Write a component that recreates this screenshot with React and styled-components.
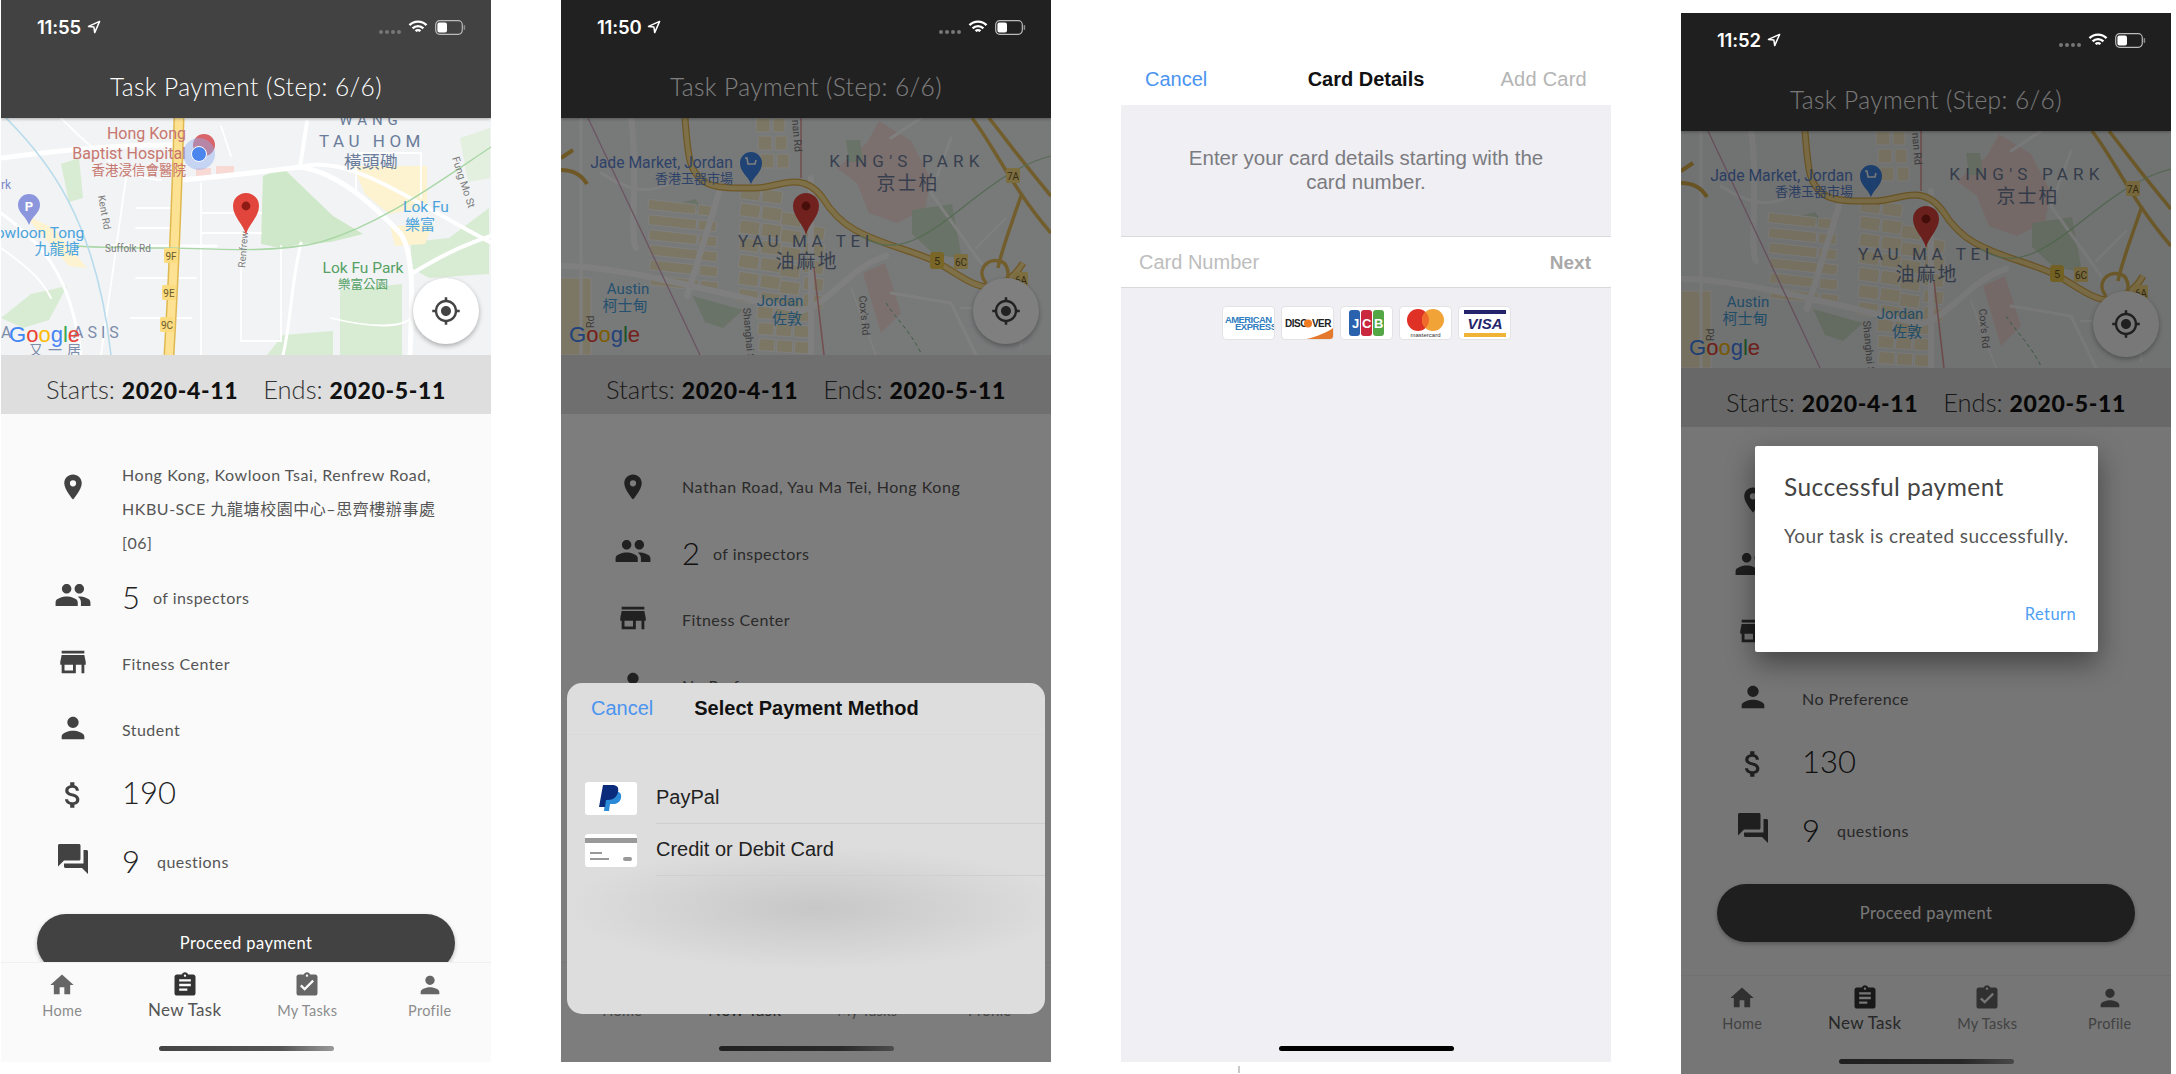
import React from 'react';
import styled, { createGlobalStyle } from 'styled-components';
import {
  MdLocationOn, MdPeople, MdStore, MdPerson, MdAttachMoney, MdForum,
  MdHome, MdAssignment, MdAssignmentTurnedIn, MdMyLocation,
} from 'react-icons/md';

const UI_FONT = '"Lato", "Noto Sans CJK TC", sans-serif';
const IOS_FONT = '"Liberation Sans", "Noto Sans CJK TC", sans-serif';
const MAP_FONT = '"Roboto", "Noto Sans CJK TC", sans-serif';

const GlobalStyle = createGlobalStyle`
  html, body { margin: 0; padding: 0; background: #fff; overflow: hidden; }
  * { box-sizing: border-box; }
`;

const Page = styled.div`
  width: 2176px;
  height: 1074px;
  padding-left: 1px;
  display: flex;
  gap: 70px;
  align-items: flex-start;
  background: #fff;
  overflow: hidden;
`;

const Phone = styled.div`
  position: relative;
  flex: none;
  width: 490px;
  height: 1062px;
  margin-top: ${(p) => p.$top || 0}px;
  display: flex;
  flex-direction: column;
  background: #fafafa;
  overflow: hidden;
  font-family: ${UI_FONT};
`;

const Dim = styled.div`
  position: absolute;
  inset: 0;
  background: rgba(0, 0, 0, ${(p) => p.$level});
  z-index: 2;
`;

const Header = styled.header`
  position: relative;
  flex: none;
  height: 118px;
  background: #424242;
  box-shadow: 0 1px 3px rgba(0, 0, 0, 0.3);
  z-index: 1;
`;

const Status = styled.div`
  position: absolute;
  left: 36px;
  right: 25px;
  top: 13px;
  height: 28px;
  display: flex;
  align-items: center;
  color: #fff;
  font-family: "Inter", sans-serif;
  z-index: 3;
`;

const Clock = styled.span`
  font-size: 18.5px;
  font-weight: 600;
  letter-spacing: -0.2px;
  margin-right: 6px;
`;

const StatusRight = styled.div`
  margin-left: auto;
  display: flex;
  align-items: center;
  gap: 7px;
`;

const SignalDots = styled.div`
  display: flex;
  gap: 2px;
  margin-top: 10px;
  & > i {
    width: 4px;
    height: 4px;
    border-radius: 50%;
    background: #777;
  }
`;

const Title = styled.h1`
  position: absolute;
  left: 0;
  right: 0;
  bottom: 15px;
  margin: 0;
  text-align: center;
  color: #fff;
  font-size: 24.5px;
  line-height: 32px;
  font-weight: 300;
  letter-spacing: 0.42px;
`;

const MapBox = styled.div`
  position: relative;
  flex: none;
  height: 237px;
  background: #f1f3f4;
  & > svg { display: block; }
`;

const LocateButton = styled.div`
  position: absolute;
  right: 12px;
  bottom: 11px;
  width: 66px;
  height: 66px;
  border-radius: 50%;
  background: #fff;
  display: flex;
  align-items: center;
  justify-content: center;
  color: #444;
  box-shadow: 0 2px 5px rgba(0, 0, 0, 0.3);
`;

const DatesBar = styled.div`
  flex: none;
  height: 59px;
  padding-top: 8px;
  background: #dedede;
  display: flex;
  align-items: center;
  justify-content: center;
  gap: 25px;
  color: #333;
  font-size: 25.5px;
  font-weight: 300;
  & b {
    font-weight: 900;
    font-size: 23px;
    color: #111;
    letter-spacing: 0.65px;
  }
`;

const Body = styled.main`
  flex: 1;
  min-height: 0;
  padding-top: 40px;
  overflow: hidden;
`;

const Row = styled.div`
  display: flex;
  align-items: center;
  min-height: 66px;
  padding-left: 23px;
  padding-right: 30px;
  color: #555;
  font-size: 16px;
`;

const RowIcon = styled.div`
  flex: none;
  align-self: flex-start;
  width: 98px;
  height: 66px;
  display: flex;
  align-items: center;
  justify-content: center;
  color: #424242;
  padding-bottom: ${(p) => p.$lift || 0}px;
`;

const Address = styled.div`
  padding: 4px 0;
  line-height: 34px;
  font-size: 16px;
  letter-spacing: 0.55px;
`;

const Count = styled.span`
  font-size: 31px;
  font-weight: 300;
  color: #222;
  margin-right: ${(p) => p.$gap}px;
  margin-bottom: ${(p) => p.$up || 0}px;
  line-height: 1;
`;

const RowText = styled.span`
  letter-spacing: 0.45px;
`;

const Primary = styled.button`
  display: block;
  width: 418px;
  height: 58px;
  margin: ${(p) => p.$gap}px auto 0;
  border: 0;
  border-radius: 29px;
  background: #424242;
  color: #fff;
  font-family: ${UI_FONT};
  font-size: 16.5px;
  letter-spacing: 0.4px;
  box-shadow: 0 2px 4px rgba(0, 0, 0, 0.25);
`;

const Tabs = styled.nav`
  position: relative;
  flex: none;
  height: 100px;
  padding: 8px 0 0;
  display: grid;
  grid-template-columns: repeat(4, 122.5px);
  background: #fafafa;
  border-top: 1px solid #f0f0f0;
`;

const Tab = styled.div`
  display: flex;
  flex-direction: column;
  align-items: center;
  color: ${(p) => p.$active ? '#333' : '#666'};
  & > span {
    margin-top: ${(p) => p.$active ? 1 : 2}px;
    font-size: ${(p) => p.$active ? 17 : 14.5}px;
    color: ${(p) => p.$active ? '#555' : '#8c8c8c'};
    line-height: 20px;
    letter-spacing: 0.3px;
  }
`;

const HomeBar = styled.div`
  position: absolute;
  left: 158px;
  bottom: 11px;
  width: 175px;
  height: 5px;
  border-radius: 3px;
  background: ${(p) => p.$solid ? '#000' : 'linear-gradient(90deg, #444 0%, #555 70%, #999 100%)'};
`;

/* payment sheet, second phone */
const Sheet = styled.section`
  position: absolute;
  left: 6px;
  top: 683px;
  width: 478px;
  height: 331px;
  border-radius: 15px;
  background:
    radial-gradient(ellipse 250px 62px at 52% 68%, #c7c7c7 0%, rgba(199, 199, 199, 0) 100%),
    #dddddd;
  font-family: ${IOS_FONT};
  z-index: 4;
`;

const SheetHead = styled.div`
  height: 52px;
  display: flex;
  align-items: center;
  padding-left: 24px;
  border-bottom: 1px solid #d9d9d9;
`;

const LinkText = styled.span`
  color: #4b94ef;
  font-size: 20px;
`;

const SheetTitle = styled.strong`
  margin-left: 41px;
  font-size: 20px;
  color: #111;
`;

const MethodList = styled.div`
  padding-top: 37px;
`;

const Method = styled.div`
  display: flex;
  align-items: center;
  height: 52px;
  padding-left: 18px;
  color: #222;
  font-size: 20px;
`;

const MethodLogo = styled.div`
  flex: none;
  width: 52px;
  height: 33px;
  border-radius: 3px;
  background: #fff;
  overflow: hidden;
  display: flex;
  align-items: center;
  justify-content: center;
`;

const MethodLabel = styled.div`
  flex: 1;
  height: 100%;
  margin-left: 19px;
  display: flex;
  align-items: center;
  border-bottom: 1px solid #cfcfcf;
`;

/* card details, third phone */
const CardScreen = styled(Phone)`
  background: #efeff4;
  font-family: ${IOS_FONT};
`;

const CardNav = styled.div`
  flex: none;
  height: 105px;
  background: #fff;
  padding: 56px 24px 0 24px;
  display: grid;
  grid-template-columns: 1fr auto 1fr;
  align-items: start;
  & > span { line-height: 46px; }
  & > strong { line-height: 46px; }
`;

const NavTitle = styled.strong`
  font-size: 20px;
  color: #111;
`;

const NavAction = styled.span`
  justify-self: end;
  font-size: 20px;
  letter-spacing: 0.25px;
  color: #b4b4b4;
`;

const Hint = styled.p`
  flex: none;
  height: 131px;
  margin: 0;
  padding: 41px 60px 0;
  text-align: center;
  color: #7b7b7f;
  font-size: 20.5px;
  line-height: 24px;
`;

const CardInput = styled.div`
  flex: none;
  height: 52px;
  display: flex;
  align-items: center;
  justify-content: space-between;
  padding: 0 20px 0 18px;
  background: #fff;
  border-top: 1px solid #d9d9dc;
  border-bottom: 1px solid #d9d9dc;
  color: #bdbdbd;
  font-size: 20px;
`;

const NextLabel = styled.span`
  color: #a9a9a9;
  font-weight: 700;
  font-size: 19px;
  margin-top: 2px;
`;

const CardLogos = styled.div`
  flex: none;
  margin-top: 18px;
  display: flex;
  justify-content: center;
  gap: 6px;
`;

const CardLogo = styled.div`
  width: 53px;
  height: 34px;
  background: #fff;
  border: 1px solid #e3e3e6;
  border-radius: 4px;
  overflow: hidden;
  & > svg { display: block; }
`;

const Tick = styled.div`
  position: absolute;
  left: 1238px;
  top: 1066px;
  width: 2px;
  height: 7px;
  background: #c8c8c8;
`;

/* dialog, fourth phone */
const Dialog = styled.section`
  position: absolute;
  left: 74px;
  top: 433px;
  width: 343px;
  height: 206px;
  padding: 25px 22px 0 29px;
  background: #fff;
  border-radius: 2px;
  box-shadow: 0 11px 28px rgba(0, 0, 0, 0.42);
  z-index: 4;
`;

const DialogTitle = styled.h2`
  margin: 0;
  font-size: 24.5px;
  line-height: 32px;
  font-weight: 400;
  color: #444;
  letter-spacing: 0.45px;
`;

const DialogText = styled.p`
  margin: 20px 0 0;
  font-size: 19px;
  line-height: 26px;
  color: #555;
  white-space: nowrap;
  letter-spacing: 0.45px;
`;

const DialogAction = styled.div`
  margin-top: 55px;
  text-align: right;
  color: #4f9ff5;
  font-size: 16.5px;
  letter-spacing: 0.4px;
`;

const StatusBar = ({ time }) => (
  <Status>
    <Clock>{time}</Clock>
    <svg width="14" height="14" viewBox="0 0 14 14" fill="none" stroke="#fff" strokeWidth="1.5" strokeLinejoin="round">
      <path d="M12.6 1.4L1.5 6.4l5.4.7.8 5.5z" />
    </svg>
    <StatusRight>
      <SignalDots><i /><i /><i /><i /></SignalDots>
      <svg width="20" height="15" viewBox="0 0 20 15" fill="none" stroke="#fff" strokeWidth="2.4">
        <path d="M1.5 5.2a12 12 0 0 1 17 0" />
        <path d="M4.6 8.4a7.6 7.6 0 0 1 10.8 0" />
        <path d="M7.6 11.2a3.4 3.4 0 0 1 4.8 0" />
      </svg>
      <svg width="31" height="15" viewBox="0 0 31 15">
        <rect x="0.7" y="0.7" width="26.6" height="13.6" rx="4" fill="none" stroke="#bbb" strokeWidth="1.2" />
        <rect x="2.4" y="2.4" width="9.6" height="10.2" rx="2" fill="#fff" />
        <rect x="28.6" y="5" width="1.6" height="5" rx="0.8" fill="#888" />
      </svg>
    </StatusRight>
  </Status>
);

const Pin = () => (
  <g>
    <path d="M245 117c-2-10-13-18-13-29a13 13 0 0 1 26 0c0 11-11 19-13 29z" fill="#e2453c" />
    <circle cx="245" cy="88" r="4.4" fill="#8e1c15" />
  </g>
);

const GoogleMark = ({ x, y }) => (
  <text x={x} y={y} fontFamily='"Liberation Sans", sans-serif' fontSize="22">
    <tspan fill="#4285f4">G</tspan>
    <tspan fill="#ea4335">o</tspan>
    <tspan fill="#fbbc05">o</tspan>
    <tspan fill="#4285f4">g</tspan>
    <tspan fill="#34a853">l</tspan>
    <tspan fill="#ea4335">e</tspan>
  </text>
);

const Shield = ({ x, y, label }) => (
  <g>
    <rect x={x} y={y} width="14" height="15" rx="1.5" fill="#fbdc81" />
    <text x={x + 7} y={y + 11.5} textAnchor="middle" fontSize="10" fontFamily={MAP_FONT} fill="#6a5a2a">{label}</text>
  </g>
);

const KowloonMap = () => (
  <svg width="490" height="237" viewBox="0 0 490 237" fontFamily={MAP_FONT}>
    <rect width="490" height="237" fill="#f1f3f4" />
    <path d="M262 58l20-8 50 48 30 18-32 8-30 2-20 4-20-4z" fill="#cfe8c9" />
    <path d="M339 172l62-6v71h-62zM266 237l16-20 50-4v24zM410 124l38-4 40-30v66l-60 4-18-10zM60 46l18-6 4 40-14 4zM0 200l30-24 36-8-18 34-26 8z" fill="#d8ecd3" />
    <path d="M459 20l30-10v50l-22 4z" fill="#e3f0df" />
    <path d="M352 48h74v40l-38 8-24-20zM389 108l43-2-8 20-30 2zM22 96l30 14 34 40-18-2-24-28z" fill="#fdf3d0" />
    <rect x="195" y="50" width="15" height="8" fill="#f8d9d4" />
    <rect x="215" y="48" width="18" height="10" fill="#f8d9d4" />
    <g fill="none" stroke="#fff" strokeLinecap="round">
      <path d="M0 40c60-8 120-14 178-13M179 62c50-4 80-8 120-13 40 6 75 40 100 66 15 20 12 70 10 122" strokeWidth="5" />
      <path d="M299 49l7-45M299 49c50-15 120 40 190 75M490 118c-30 10-50 20-80 38" strokeWidth="4" />
      <path d="M0 95c40 30 70 60 80 142M110 128h105M300 125c-10 40-10 80-18 112" strokeWidth="3" />
      <path d="M125 60l-25 177M200 65v172M240 128v95h40v-95M135 160h60M60 0c30 30 60 60 100 62M220 8l10 30M330 200c40 10 70 10 80 0M130 200h60M355 75v-40h65v45M0 130c25 18 40 30 50 50M135 90h40M135 110h40M200 95h60M200 115h60" strokeWidth="1.8" />
    </g>
    <path d="M178 0c-2 70-6 170-10 237" fill="none" stroke="#e0b850" strokeWidth="11" />
    <path d="M178 0c-2 70-6 170-10 237" fill="none" stroke="#fde293" strokeWidth="8" />
    <path d="M75 128c30 2 60 2 95 2 60 2 110 4 150-6 60-18 110-55 170-95" fill="none" stroke="#a9d7a6" strokeWidth="1.4" />
    <path d="M5 0c40 40 90 100 105 237" fill="none" stroke="#b8dcec" strokeWidth="1.6" />
    <g fontSize="16" fill="#c7766f" textAnchor="end">
      <text x="185" y="21">Hong Kong</text>
      <text x="185" y="41">Baptist Hospital</text>
      <text x="185" y="57" fontSize="13.5">香港浸信會醫院</text>
    </g>
    <circle cx="203" cy="27" r="11" fill="#d9646a" />
    <circle cx="198" cy="36" r="16" fill="#8fb0ef" opacity="0.45" />
    <circle cx="198" cy="36" r="7.5" fill="#4a86ee" stroke="#fff" strokeWidth="1" />
    <g fill="#6b7d9b" textAnchor="middle">
      <text x="371" y="29" fontSize="17" letterSpacing="4.5">TAU HOM</text>
      <text x="370" y="50" fontSize="17.5" letterSpacing="0.5">橫頭磡</text>
      <text x="370" y="7" fontSize="15" letterSpacing="5">WANG</text>
    </g>
    <g fill="#4aa3dc" textAnchor="middle">
      <text x="425" y="94" fontSize="15.5">Lok Fu</text>
      <text x="419" y="112" fontSize="15">樂富</text>
      <text x="39" y="120" fontSize="15.5">owloon Tong</text>
      <text x="56" y="136" fontSize="15">九龍塘</text>
    </g>
    <g fill="#55a164" textAnchor="middle">
      <text x="362" y="155" fontSize="15.5">Lok Fu Park</text>
      <text x="362" y="171" fontSize="12.5">樂富公園</text>
    </g>
    <g fontSize="10" fill="#7c7c7c">
      <text x="104" y="134">Suffolk Rd</text>
      <text transform="translate(97 78) rotate(80)">Kent Rd</text>
      <text transform="translate(244 150) rotate(-85)">Renfrew</text>
      <text transform="translate(451 40) rotate(72)" fontSize="10.5">Fung Mo St</text>
    </g>
    <path d="M29 87a11 11 0 1 0-22 0c0 8 8 11 11 20 3-9 11-12 11-20z" transform="translate(10 0)" fill="#8b96dd" />
    <text x="28" y="93" fontSize="13" fontWeight="700" fill="#fff" textAnchor="middle">P</text>
    <text x="0" y="71" fontSize="12" fill="#7c87c8">rk</text>
    <Shield x={163} y={130} label="9F" />
    <Shield x={161} y={167} label="9E" />
    <Shield x={159} y={199} label="9C" />
    <g fill="#7c8cab" fontSize="16" letterSpacing="4">
      <text x="0" y="220">A</text>
      <text x="72" y="220">ASIS</text>
    </g>
    <text x="28" y="237" fontSize="14" fill="#7c8cab" letterSpacing="5">又一居</text>
    <GoogleMark x={8} y={224} />
    <Pin />
  </svg>
);

const blockRows = (x, y, count, step, w, h) =>
  Array.from({ length: count }, (_, i) => (
    <rect key={i} x={x + i * 2} y={y + i * step} width={w} height={h} rx="1" />
  ));

const JordanMap = () => (
  <svg width="490" height="237" viewBox="0 0 490 237" fontFamily={MAP_FONT}>
    <rect width="490" height="237" fill="#f0f2f3" />
    <path d="M276 50l30-25 12-22 32 20 20 38-6 30-28 14-28-10-12-30zM302 155l22-10 16 50-20 20z" fill="#f7e0dc" />
    <path d="M351 92l40-6 10 55-28-5-22-20zM132 178l50 14-20 18-18-6zM285 22h14l3 22h-14zM120 85l14-4 8 10-12 2z" fill="#d5e6ce" />
    <g fill="#f8eecb" stroke="#fff" strokeWidth="1">
      <g transform="rotate(6 120 110)">{blockRows(85, 85, 6, 15, 48, 10)}{blockRows(135, 85, 6, 15, 18, 10)}</g>
      <g transform="rotate(8 230 110)">
        {blockRows(175, 75, 7, 17, 20, 13)}{blockRows(197, 75, 7, 17, 20, 13)}{blockRows(219, 95, 6, 17, 20, 13)}{blockRows(244, 105, 5, 17, 20, 13)}
      </g>
      <g transform="rotate(4 220 210)">{blockRows(195, 190, 3, 16, 16, 12)}{blockRows(213, 190, 3, 16, 16, 12)}{blockRows(231, 190, 3, 16, 16, 12)}</g>
      <g>{blockRows(195, 0, 3, 18, 14, 14)}{blockRows(212, 0, 3, 18, 12, 14)}</g>
      <rect x="0" y="160" width="30" height="77" />
    </g>
    <g fill="none" stroke="#fff" strokeLinecap="round">
      <path d="M70 0c8 50-2 120 5 130M0 148c60 0 150 25 240 45 30-8 50-45 85-55M160 68l-34 110M250 60v177" strokeWidth="6" />
      <path d="M20 0v237M330 175l60 10 25 52M390 20l-20 55 50 70M330 20l30-20M40 55c30 20 50 20 70 10" strokeWidth="3" />
      <path d="M290 170l25 67M445 100l-30 30M400 190h60v40" strokeWidth="1.8" />
    </g>
    <path d="M27 0l112 237" fill="none" stroke="#d6a9c2" strokeWidth="1.3" />
    <path d="M240 0v60M253 150l10 87" fill="none" stroke="#e8a0a0" strokeWidth="1.6" />
    <path d="M124 0c3 40 5 50 13 58 10 14 35 12 57 12 15 0 25-6 40-6 12 0 20 6 27 15 10 16 20 26 33 33 25 14 55 20 77 30 20 9 40 28 58 27 12-1 25-10 33-24" fill="none" stroke="#ddb04c" strokeWidth="7" />
    <path d="M124 0c3 40 5 50 13 58 10 14 35 12 57 12 15 0 25-6 40-6 12 0 20 6 27 15 10 16 20 26 33 33 25 14 55 20 77 30 20 9 40 28 58 27 12-1 25-10 33-24" fill="none" stroke="#fde293" strokeWidth="4.5" />
    <path d="M411 0c20 25 40 70 79 115M428 0c20 25 30 40 62 78M461 75c-10 30-20 55-24 75M425 165c-10-12 0-25 14-22 8 2 10 14 6 20" fill="none" stroke="#e4bb58" strokeWidth="3.5" />
    <path d="M0 52c10 0 20 4 26 14M0 40l12-8" fill="none" stroke="#ddb04c" strokeWidth="4" />
    <path d="M300 118c60 40 110-60 190-80" fill="none" stroke="#a9d7a6" strokeWidth="1.2" />
    <path d="M325 185c10 15 25 30 35 50" fill="none" stroke="#7cc08a" strokeWidth="1" strokeDasharray="4 3" />
    <text x="172" y="50" textAnchor="end" fontSize="15.7" fill="#5b85d0">Jade Market, Jordan</text>
    <text x="172" y="65" textAnchor="end" fontSize="13" fill="#5b85d0">香港玉器市場</text>
    <path d="M190 66c-3-8-11-12-11-21a11 11 0 0 1 22 0c0 9-8 13-11 21z" fill="#3f86e8" />
    <path d="M184 40h2l1 6h7l1-4" fill="none" stroke="#fff" strokeWidth="1.6" />
    <g fill="#6f7f9c" textAnchor="middle">
      <text x="346" y="49" fontSize="17" letterSpacing="5.2">KING'S PARK</text>
      <text x="347" y="72" fontSize="19" letterSpacing="2">京士柏</text>
      <text x="245" y="129" fontSize="17" letterSpacing="4.6">YAU MA TEI</text>
      <text x="246" y="150" fontSize="19" letterSpacing="2">油麻地</text>
    </g>
    <g fill="#4aa3dc" textAnchor="middle">
      <text x="67" y="176" fontSize="15">Austin</text>
      <text x="64" y="193" fontSize="15">柯士甸</text>
      <text x="219" y="188" fontSize="15">Jordan</text>
      <text x="226" y="206" fontSize="15">佐敦</text>
    </g>
    <g fontSize="10.5" fill="#7c7c7c">
      <text transform="translate(231 2) rotate(85)">nan Rd</text>
      <text transform="translate(33 210) rotate(-90)">Rd</text>
      <text transform="translate(182 190) rotate(85)">Shanghai S</text>
      <text transform="translate(298 178) rotate(85)">Cox's Rd</text>
    </g>
    <Shield x={445} y={50} label="7A" />
    <rect x="369" y="134" width="14" height="17" rx="3" fill="#f5cf4e" />
    <text x="376" y="147" textAnchor="middle" fontSize="11" fill="#6a5a2a">5</text>
    <Shield x={393} y={136} label="6C" />
    <Shield x={453} y={154} label="6A" />
    <GoogleMark x={8} y={224} />
    <Pin />
  </svg>
);

const TaskScreen = ({ time, map, address, inspectors, category, role, price, top, dim, gap, children }) => (
  <Phone $top={top}>
    <Header>
      <Title>Task Payment (Step: 6/6)</Title>
    </Header>
    <MapBox>
      {map}
      <LocateButton><MdMyLocation size={30} /></LocateButton>
    </MapBox>
    <DatesBar>
      <span>Starts: <b>2020-4-11</b></span>
      <span>Ends: <b>2020-5-11</b></span>
    </DatesBar>
    <Body>
      <Row>
        <RowIcon><MdLocationOn size={30} /></RowIcon>
        <Address>{address}</Address>
      </Row>
      <Row>
        <RowIcon $lift={5}><MdPeople size={38} /></RowIcon>
        <Count $gap={13}>{inspectors}</Count>
        <RowText>of inspectors</RowText>
      </Row>
      <Row>
        <RowIcon $lift={3}><MdStore size={34} /></RowIcon>
        <RowText>{category}</RowText>
      </Row>
      <Row>
        <RowIcon $lift={3}><MdPerson size={34} /></RowIcon>
        <RowText>{role}</RowText>
      </Row>
      <Row>
        <RowIcon $lift={1}><MdAttachMoney size={34} /></RowIcon>
        <Count $gap={0} $up={5}>{price}</Count>
      </Row>
      <Row>
        <RowIcon $lift={4}><MdForum size={36} /></RowIcon>
        <Count $gap={17}>9</Count>
        <RowText>questions</RowText>
      </Row>
      <Primary $gap={gap}>Proceed payment</Primary>
    </Body>
    <Tabs>
      <Tab><MdHome size={28} /><span>Home</span></Tab>
      <Tab $active><MdAssignment size={28} /><span>New Task</span></Tab>
      <Tab><MdAssignmentTurnedIn size={28} /><span>My Tasks</span></Tab>
      <Tab><MdPerson size={28} /><span>Profile</span></Tab>
      <HomeBar />
    </Tabs>
    {dim && <Dim $level={dim} />}
    <StatusBar time={time} />
    {children}
  </Phone>
);

const PaypalMark = () => (
  <svg width="26" height="28" viewBox="0 0 26 28">
    <path d="M8 7h8c5 0 8 2 7 7-1 4-4 6-8 6h-3l-1 7H6z" fill="#2a8ad8" />
    <path d="M5 1h9c5 0 7 2 6 7-1 5-5 8-10 8H8l-1 7H1z" fill="#0a2a7c" />
  </svg>
);

const CardMark = () => (
  <svg width="52" height="33" viewBox="0 0 52 33">
    <rect y="4" width="52" height="5" fill="#999" />
    <rect x="5" y="18" width="12" height="2" fill="#999" />
    <rect x="5" y="24" width="19" height="2" fill="#999" />
    <rect x="38" y="23" width="9" height="4" rx="2" fill="#999" />
  </svg>
);

const Amex = () => (
  <svg width="51" height="32" viewBox="0 0 51 32" fontFamily='"Liberation Sans", sans-serif' fontWeight="700" fill="#2f7dc0">
    <text x="2" y="16" fontSize="9.4" letterSpacing="-0.5">AMERICAN</text>
    <text x="12" y="23" fontSize="9.4" letterSpacing="-0.4">EXPRESS</text>
  </svg>
);

const Discover = () => (
  <svg width="51" height="32" viewBox="0 0 51 32" fontFamily='"Liberation Sans", sans-serif' fontWeight="700">
    <text x="3" y="20" fontSize="10" letterSpacing="-0.5" fill="#222">DISC</text>
    <circle cx="26" cy="16.5" r="4" fill="#ee7a22" />
    <text x="30" y="20" fontSize="10" letterSpacing="-0.6" fill="#222">VER</text>
    <path d="M20 33c14-3 24-7 31-12v12z" fill="#e4792d" />
  </svg>
);

const Jcb = () => (
  <svg width="51" height="32" viewBox="0 0 51 32" fontFamily='"Liberation Sans", sans-serif' fontWeight="700" fontSize="13" fill="#fff">
    <rect x="8" y="3" width="11" height="26" rx="3" fill="#2a62ae" />
    <rect x="20" y="3" width="11" height="26" rx="3" fill="#c9283e" />
    <rect x="32" y="3" width="11" height="26" rx="3" fill="#53a744" />
    <text x="11" y="21">J</text>
    <text x="21" y="21">C</text>
    <text x="33" y="21">B</text>
  </svg>
);

const Mastercard = () => (
  <svg width="51" height="32" viewBox="0 0 51 32" fontFamily='"Liberation Sans", sans-serif'>
    <circle cx="18" cy="13" r="11" fill="#e03127" />
    <circle cx="33" cy="13" r="11" fill="#f1a338" />
    <path d="M25.5 5a11 11 0 0 1 0 16 11 11 0 0 1 0-16z" fill="#ef6a2b" />
    <text x="25.5" y="30" fontSize="6" textAnchor="middle" fill="#333">mastercard</text>
  </svg>
);

const Visa = () => (
  <svg width="51" height="32" viewBox="0 0 51 32" fontFamily='"Liberation Sans", sans-serif'>
    <rect x="5" y="3" width="42" height="4" fill="#23246b" />
    <text x="26" y="22" fontSize="15" fontWeight="700" fontStyle="italic" textAnchor="middle" fill="#23246b">VISA</text>
    <rect x="5" y="26" width="42" height="4" fill="#f0b336" />
  </svg>
);

const App = () => (
  <Page>
    <GlobalStyle />
    <TaskScreen
      time="11:55"
      map={<KowloonMap />}
      address={<>Hong Kong, Kowloon Tsai, Renfrew Road,<br />HKBU-SCE 九龍塘校園中心–思齊樓辦事處<br />[06]</>}
      inspectors="5"
      category="Fitness Center"
      role="Student"
      price="190"
      gap={20}
    />

    <TaskScreen
      time="11:50"
      map={<JordanMap />}
      address="Nathan Road, Yau Ma Tei, Hong Kong"
      inspectors="2"
      category="Fitness Center"
      role="No Preference"
      price="130"
      gap={21}
      dim={0.5}
    >
      <Sheet>
        <SheetHead>
          <LinkText>Cancel</LinkText>
          <SheetTitle>Select Payment Method</SheetTitle>
        </SheetHead>
        <MethodList>
          <Method>
            <MethodLogo><PaypalMark /></MethodLogo>
            <MethodLabel>PayPal</MethodLabel>
          </Method>
          <Method>
            <MethodLogo><CardMark /></MethodLogo>
            <MethodLabel>Credit or Debit Card</MethodLabel>
          </Method>
        </MethodList>
      </Sheet>
    </TaskScreen>

    <CardScreen>
      <CardNav>
        <LinkText>Cancel</LinkText>
        <NavTitle>Card Details</NavTitle>
        <NavAction>Add Card</NavAction>
      </CardNav>
      <Hint>Enter your card details starting with the card number.</Hint>
      <CardInput>
        <span>Card Number</span>
        <NextLabel>Next</NextLabel>
      </CardInput>
      <CardLogos>
        <CardLogo><Amex /></CardLogo>
        <CardLogo><Discover /></CardLogo>
        <CardLogo><Jcb /></CardLogo>
        <CardLogo><Mastercard /></CardLogo>
        <CardLogo><Visa /></CardLogo>
      </CardLogos>
      <HomeBar $solid />
    </CardScreen>

    <TaskScreen
      time="11:52"
      map={<JordanMap />}
      address="Nathan Road, Yau Ma Tei, Hong Kong"
      inspectors="2"
      category="Fitness Center"
      role="No Preference"
      price="130"
      top={13}
      gap={21}
      dim={0.53}
    >
      <Dialog>
        <DialogTitle>Successful payment</DialogTitle>
        <DialogText>Your task is created successfully.</DialogText>
        <DialogAction>Return</DialogAction>
      </Dialog>
    </TaskScreen>
    <Tick />
  </Page>
);

export default App;
